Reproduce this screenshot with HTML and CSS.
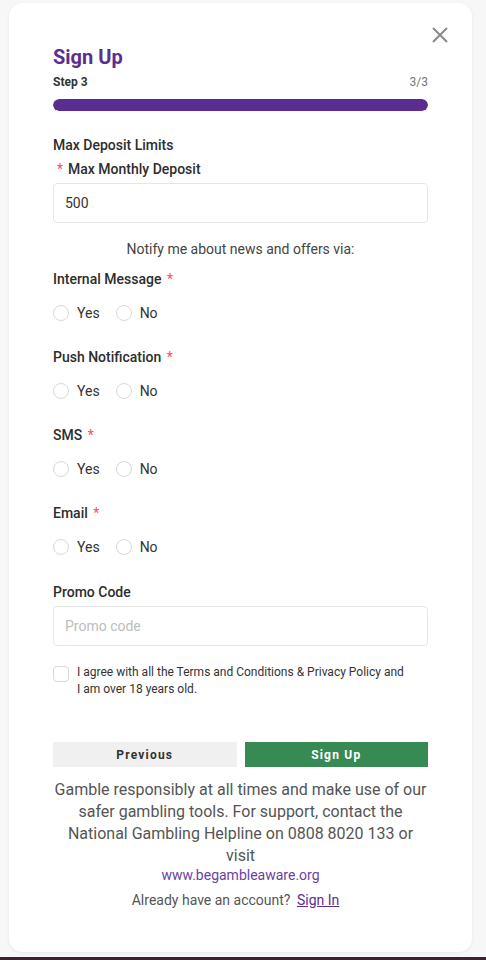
FILE: index.html
```html
<!DOCTYPE html>
<html lang="en">
<head>
<meta charset="utf-8">
<title>Sign Up</title>
<link rel="stylesheet" href="styles.css">
</head>
<body>
<div class="page">
  <div class="card">
    <button class="close" aria-label="Close">
      <svg width="16" height="16" viewBox="0 0 16 16"><path d="M1 1 L15 15 M15 1 L1 15" stroke="#8a8a8a" stroke-width="2" fill="none"/></svg>
    </button>
    <h1 class="title">Sign Up</h1>
    <div class="step-row"><span class="step">Step 3</span><span class="count">3/3</span></div>
    <div class="progress"><div class="progress-fill"></div></div>

    <div class="section-title">Max Deposit Limits</div>
    <div class="label label-pre"><span class="req req-pre">*</span>Max Monthly Deposit</div>
    <div class="input">500</div>

    <div class="notify">Notify me about news and offers via:</div>

    <div class="group">
      <div class="label">Internal Message <span class="req">*</span></div>
      <div class="radios"><span class="radio"><span class="dot"></span>Yes</span><span class="radio"><span class="dot"></span>No</span></div>
    </div>
    <div class="group">
      <div class="label">Push Notification <span class="req">*</span></div>
      <div class="radios"><span class="radio"><span class="dot"></span>Yes</span><span class="radio"><span class="dot"></span>No</span></div>
    </div>
    <div class="group">
      <div class="label">SMS <span class="req">*</span></div>
      <div class="radios"><span class="radio"><span class="dot"></span>Yes</span><span class="radio"><span class="dot"></span>No</span></div>
    </div>
    <div class="group">
      <div class="label">Email <span class="req">*</span></div>
      <div class="radios"><span class="radio"><span class="dot"></span>Yes</span><span class="radio"><span class="dot"></span>No</span></div>
    </div>

    <div class="label promo-label">Promo Code</div>
    <div class="input placeholder">Promo code</div>

    <div class="agree">
      <span class="box"></span>
      <span class="agree-text">I agree with all the Terms and Conditions &amp; Privacy Policy and I am over 18 years old.</span>
    </div>

    <div class="buttons">
      <button class="btn btn-prev">Previous</button>
      <button class="btn btn-next">Sign Up</button>
    </div>

    <p class="gamble">Gamble responsibly at all times and make use of our safer gambling tools. For support, contact the National Gambling Helpline on 0808 8020 133 or visit</p>
    <a class="aware">www.begambleaware.org</a>
    <div class="already">Already have an account? <a class="signin">Sign In</a></div>
  </div>
</div>
<div class="bottom-bar"></div>
</body>
</html>
```
FILE: styles.css
```css
* { box-sizing: border-box; }
html, body { margin: 0; padding: 0; }
body {
  background: #f7f7f7;
  font-family: Roboto, "Liberation Sans", Arial, sans-serif;
  color: #333;
  height: 960px;
  overflow: hidden;
  position: relative;
}
.page { padding: 3px 0 0 9px; }
.card {
  position: relative;
  width: 463px;
  height: 949px;
  background: #fff;
  border-radius: 14px;
  box-shadow: 0 1px 4px rgba(0,0,0,0.06);
  padding: 42px 44px 0 44px;
}
.close {
  position: absolute;
  top: 24px;
  right: 24px;
  width: 16px;
  height: 16px;
  padding: 0;
  border: 0;
  background: transparent;
  display: flex;
}
.title {
  margin: 0;
  font-size: 20px;
  line-height: 24px;
  font-weight: 700;
  color: #5c2d91;
}
.step-row {
  margin-top: 5px;
  display: flex;
  justify-content: space-between;
  font-size: 12px;
  line-height: 16px;
}
.step { font-weight: 700; color: #333; }
.count { color: #777; }
.progress {
  margin-top: 9px;
  height: 12px;
  border-radius: 6px;
  background: #eee;
  overflow: hidden;
}
.progress-fill { width: 100%; height: 100%; background: #5c2d91; border-radius: 6px; }
.section-title {
  margin-top: 24px;
  font-size: 14px;
  line-height: 20px;
  font-weight: 500;
  color: #2d2d2d;
}
.label {
  font-size: 14px;
  line-height: 20px;
  font-weight: 500;
  color: #2d2d2d;
}
.label-pre { margin-top: 4px; padding-left: 4px; }
.req { color: #ff4d4f; font-weight: 400; margin-left: 2px; }
.req-pre { margin-left: 0; margin-right: 5px; }
.input {
  margin-top: 4px;
  height: 40px;
  border: 1px solid #e6e6e6;
  border-radius: 4px;
  padding: 0 11px;
  display: flex;
  align-items: center;
  font-size: 14px;
  color: #333;
}
.placeholder { color: #bdbdbd; }
.notify {
  margin-top: 16px;
  text-align: center;
  font-size: 14px;
  line-height: 20px;
  color: #444;
}
.group { margin-top: 10px; }
.group + .group { margin-top: 24px; }
.radios {
  margin-top: 14px;
  display: flex;
  height: 20px;
  align-items: center;
}
.radio {
  display: flex;
  align-items: center;
  font-size: 14px;
  color: #333;
  margin-right: 8px;
  padding-right: 8px;
}
.dot {
  width: 16px;
  height: 16px;
  border: 1px solid #d9d9d9;
  border-radius: 50%;
  margin-right: 8px;
  background: #fff;
}
.promo-label { margin-top: 25px; }
.agree {
  margin-top: 18px;
  display: flex;
  align-items: flex-start;
  font-size: 12px;
  line-height: 17px;
  color: #333;
}
.box {
  flex: none;
  width: 16px;
  height: 16px;
  border: 1px solid #d9d9d9;
  border-radius: 4px;
  margin-top: 2px;
  margin-right: 8px;
}
.agree-text { width: 330px; }
.buttons {
  margin-top: 44px;
  display: flex;
  gap: 8px;
}
.btn {
  flex: 1;
  height: 25px;
  border: 0;
  padding: 0;
  font-family: Roboto, "Liberation Sans", Arial, sans-serif;
  font-size: 12px;
  font-weight: 700;
  letter-spacing: 1.2px;
}
.btn-prev { background: #f0f0f0; color: #333; }
.btn-next { background: #378a53; color: #fff; }
.gamble {
  margin: 12px 0 0 0;
  text-align: center;
  font-size: 16px;
  line-height: 22px;
  color: #555;
}
.aware {
  display: block;
  text-align: center;
  font-size: 14px;
  line-height: 16px;
  color: #6b3fa3;
}
.already {
  margin-top: 7px;
  padding-right: 10px;
  text-align: center;
  font-size: 14px;
  line-height: 20px;
  color: #555;
}
.signin {
  color: #5c2d91;
  text-decoration: underline;
  margin-left: 3px;
}
.bottom-bar {
  position: absolute;
  left: 0;
  right: 0;
  bottom: 0;
  height: 3px;
  background: #3a2233;
}
```
